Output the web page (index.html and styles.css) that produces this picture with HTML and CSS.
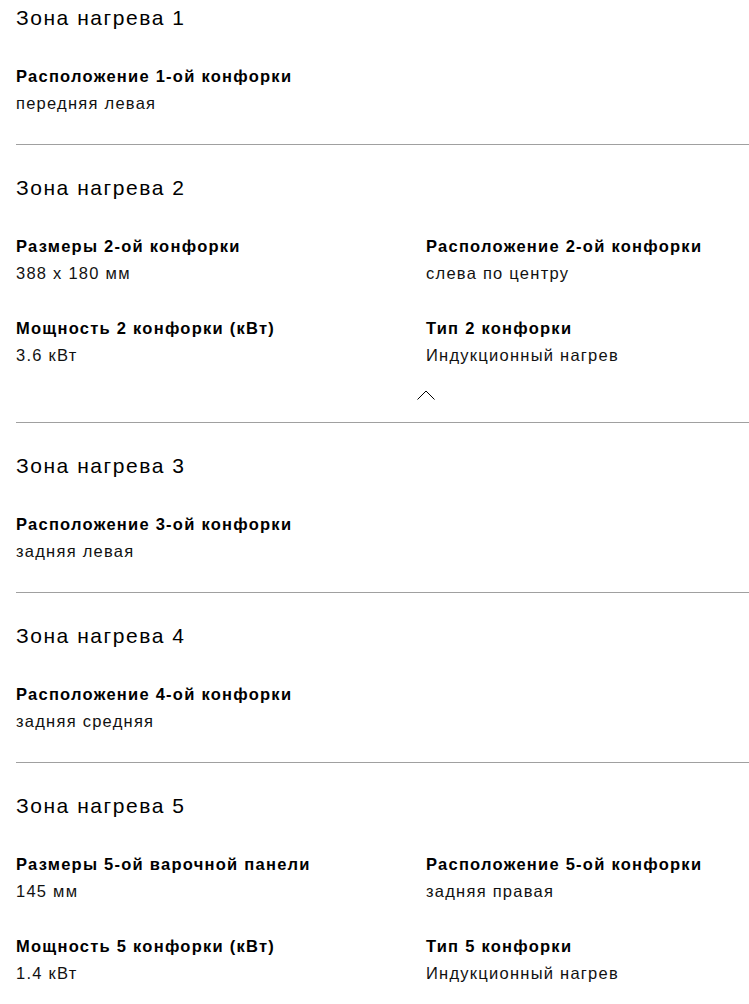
FILE: index.html
```html
<!DOCTYPE html>
<html lang="ru">
<head>
<meta charset="utf-8">
<link rel="stylesheet" href="styles.css">
</head>
<body>
<main class="specs">
  <section class="zone zone-first">
    <h2 class="zone-title">Зона нагрева 1</h2>
    <dl class="props">
      <div class="prop"><dt>Расположение 1-ой конфорки</dt><dd>передняя левая</dd></div>
    </dl>
  </section>
  <section class="zone zone-open">
    <h2 class="zone-title">Зона нагрева 2</h2>
    <dl class="props">
      <div class="prop"><dt>Размеры 2-ой конфорки</dt><dd>388 x 180 мм</dd></div>
      <div class="prop"><dt>Расположение 2-ой конфорки</dt><dd>слева по центру</dd></div>
      <div class="prop"><dt>Мощность 2 конфорки (кВт)</dt><dd>3.6 кВт</dd></div>
      <div class="prop"><dt>Тип 2 конфорки</dt><dd>Индукционный нагрев</dd></div>
    </dl>
    <button class="toggle" type="button" aria-label="Свернуть">
      <svg width="18" height="10" viewBox="0 0 18 10"><polyline points="0.5,9.5 9,1 17.5,9.5" fill="none" stroke="#000" stroke-width="1"/></svg>
    </button>
  </section>
  <section class="zone">
    <h2 class="zone-title">Зона нагрева 3</h2>
    <dl class="props">
      <div class="prop"><dt>Расположение 3-ой конфорки</dt><dd>задняя левая</dd></div>
    </dl>
  </section>
  <section class="zone">
    <h2 class="zone-title">Зона нагрева 4</h2>
    <dl class="props">
      <div class="prop"><dt>Расположение 4-ой конфорки</dt><dd>задняя средняя</dd></div>
    </dl>
  </section>
  <section class="zone">
    <h2 class="zone-title">Зона нагрева 5</h2>
    <dl class="props">
      <div class="prop"><dt>Размеры 5-ой варочной панели</dt><dd>145 мм</dd></div>
      <div class="prop"><dt>Расположение 5-ой конфорки</dt><dd>задняя правая</dd></div>
      <div class="prop"><dt>Мощность 5 конфорки (кВт)</dt><dd>1.4 кВт</dd></div>
      <div class="prop"><dt>Тип 5 конфорки</dt><dd>Индукционный нагрев</dd></div>
    </dl>
  </section>
</main>
</body>
</html>
```
FILE: styles.css
```css
body {
  margin: 0;
  padding: 0 0 0 16px;
  background: #fff;
  color: #000;
  font-family: "Liberation Sans", Arial, sans-serif;
}
.zone {
  padding: 28px 0 27px;
  border-bottom: 1px solid #a0a0a0;
}
.zone-first {
  padding-top: 3px;
}
.zone-open {
  padding-bottom: 22px;
}
.zone-title {
  margin: 0;
  font-size: 21px;
  font-weight: 400;
  line-height: 30px;
  letter-spacing: 1.55px;
}
.props {
  margin: 30px 0 0;
  display: grid;
  grid-template-columns: 410px 1fr;
  row-gap: 28px;
}
.prop dt {
  font-size: 16.5px;
  font-weight: 700;
  line-height: 27px;
  letter-spacing: 1.25px;
}
.prop dd {
  margin: 0;
  font-size: 16.5px;
  line-height: 27px;
  letter-spacing: 1.25px;
  color: #111;
}
.toggle {
  display: block;
  margin: 21px 0 0 401px;
  padding: 0;
  border: 0;
  background: none;
  width: 18px;
  height: 10px;
  line-height: 0;
}
.toggle svg {
  display: block;
}
```
